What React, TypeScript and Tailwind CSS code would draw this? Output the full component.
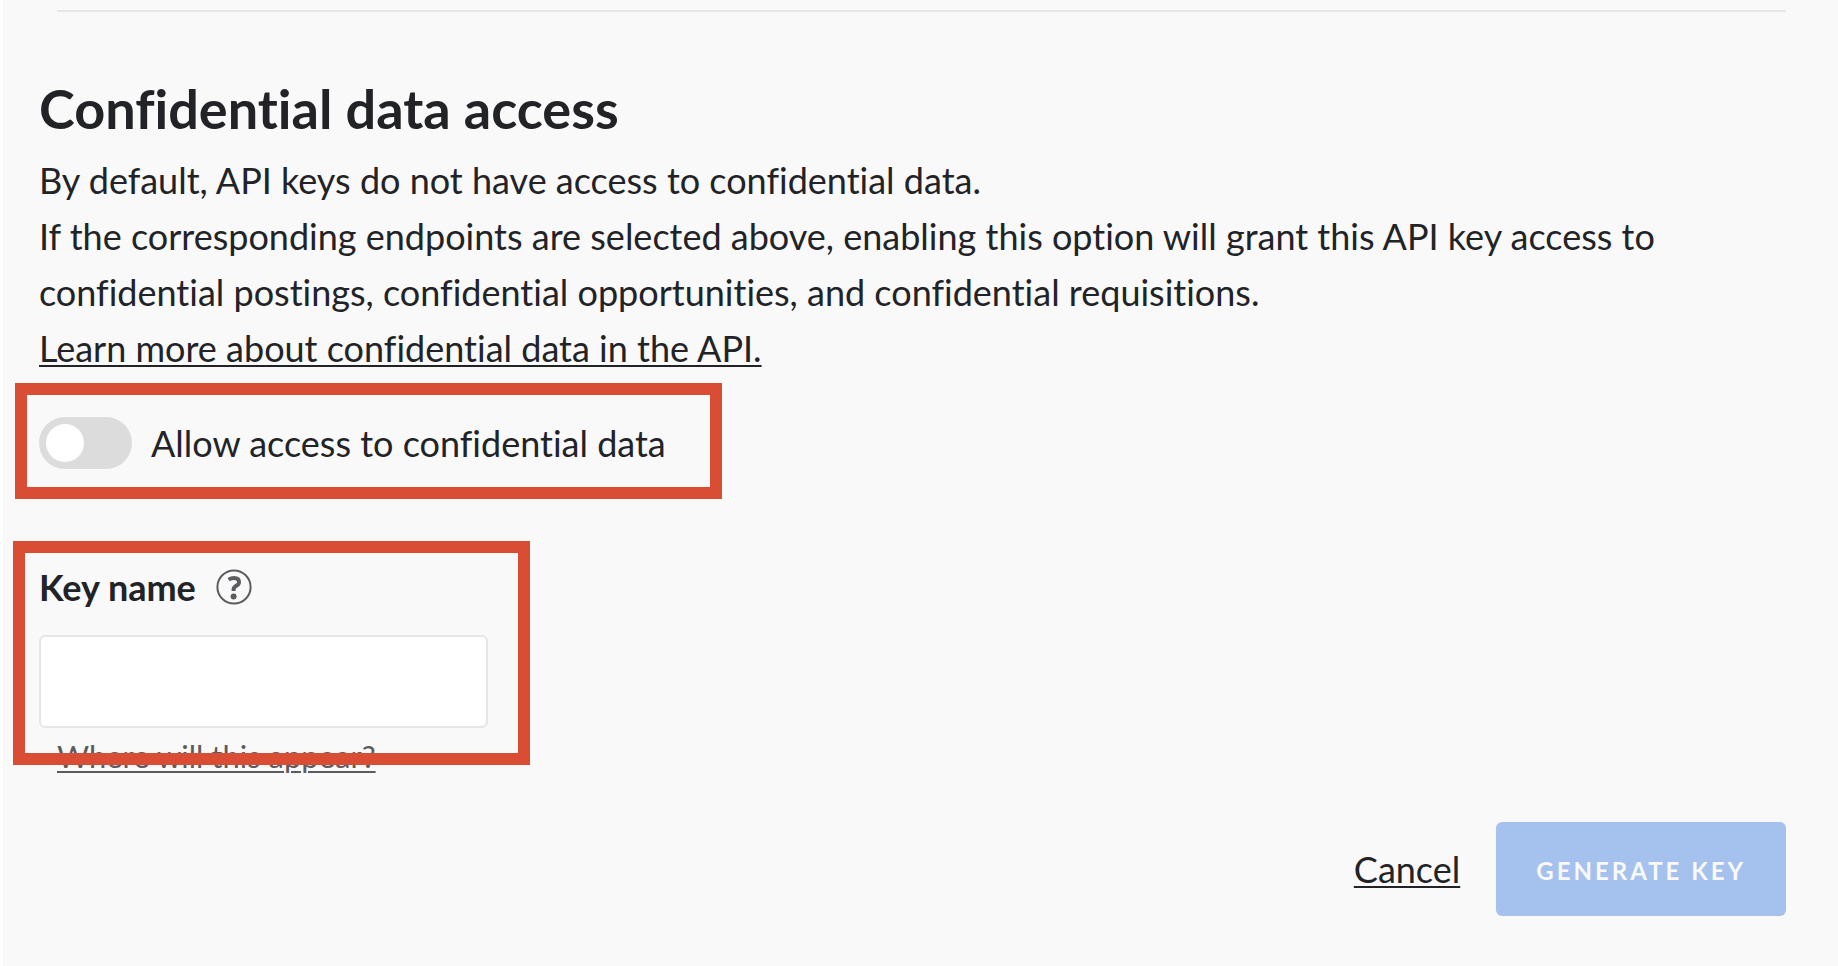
import { useState } from "react";

function Highlight({ className }: { className: string }) {
  return (
    <div
      aria-hidden="true"
      className={`pointer-events-none absolute border-12 border-[#d84d33] ${className}`}
    />
  );
}

function HelpIcon() {
  return (
    <svg width="36" height="36" viewBox="0 0 36 36" fill="none" aria-hidden="true">
      <circle cx="18" cy="18" r="16.6" stroke="#5b5c60" strokeWidth="2" />
      <path
        d="M12.6 10.6C14.4 9.5 16 9.1 18 9.1C21.2 9.1 23 10.7 23 13.2C23 17.2 17.6 16.4 17.6 20.4V22"
        stroke="#5b5c60"
        strokeWidth="4"
      />
      <circle cx="17.6" cy="27.4" r="3" fill="#5b5c60" />
    </svg>
  );
}

export default function App() {
  const [allowed, setAllowed] = useState(false);
  const [keyName, setKeyName] = useState("");

  return (
    <main className="min-h-screen border-l-3 border-white bg-[#f9f9f9] pt-[10px] pr-[52px] pb-12 pl-9 font-['Lato','Open_Sans',sans-serif] text-[36px] leading-14 text-[#222327] [font-variant-ligatures:none]">
      <hr className="ml-[18px] border-t-2 border-[#e6e6e6]" />

      {/* Confidential access */}
      <section className="pt-15">
        <h2 className="mb-1.5 text-[54px] leading-[74px] font-bold">Confidential data access</h2>
        <p>By default, API keys do not have access to confidential data.</p>
        <p className="max-w-[1660px]">
          If the corresponding endpoints are selected above, enabling this option will grant this API key access to
          confidential postings, confidential opportunities, and confidential requisitions.
        </p>
        <a href="#learn-more" className="underline decoration-2 underline-offset-3">
          Learn more about confidential data in the API.
        </a>

        <div className="relative mt-[39px] w-fit">
          <label className="flex items-center gap-[19px]">
            <input
              type="checkbox"
              role="switch"
              checked={allowed}
              onChange={(e) => setAllowed(e.target.checked)}
              className="peer sr-only"
            />
            <span className="flex h-[52px] w-[93px] items-center rounded-full bg-[#dcdcdc] px-[7px] peer-checked:justify-end peer-checked:bg-[#4a86e0]">
              <span className="size-[38px] rounded-full bg-white" />
            </span>
            Allow access to confidential data
          </label>
          <Highlight className="-top-8 -right-14 -bottom-7 -left-6" />
        </div>
      </section>

      {/* Key name */}
      <section className="relative mt-[88px] w-fit">
        <div className="flex items-center gap-5">
          <label htmlFor="key-name" className="font-bold">
            Key name
          </label>
          <button type="button" aria-label="About key names">
            <HelpIcon />
          </button>
        </div>
        <input
          id="key-name"
          type="text"
          value={keyName}
          onChange={(e) => setKeyName(e.target.value)}
          className="mt-5 block h-[93px] w-[449px] rounded-md border-2 border-[#e6e6e6] bg-white px-4 outline-none"
        />
        <a
          href="#where"
          className="mt-1 ml-[18px] block w-fit text-[31px] leading-12 text-[#5b5c60] underline decoration-2 underline-offset-3"
        >
          Where will this appear?
        </a>
        <Highlight className="-top-[18px] -right-[42px] bottom-[15px] -left-[26px]" />
      </section>

      <footer className="mt-[42px] flex items-center justify-end gap-9">
        <button type="button" className="underline decoration-2 underline-offset-3">
          Cancel
        </button>
        <button
          type="button"
          className="h-[94px] rounded-md bg-[#a5c1ee] px-10 pt-1 text-2xl font-bold tracking-[3px] text-[#f9f9f9]"
        >
          GENERATE KEY
        </button>
      </footer>
    </main>
  );
}
